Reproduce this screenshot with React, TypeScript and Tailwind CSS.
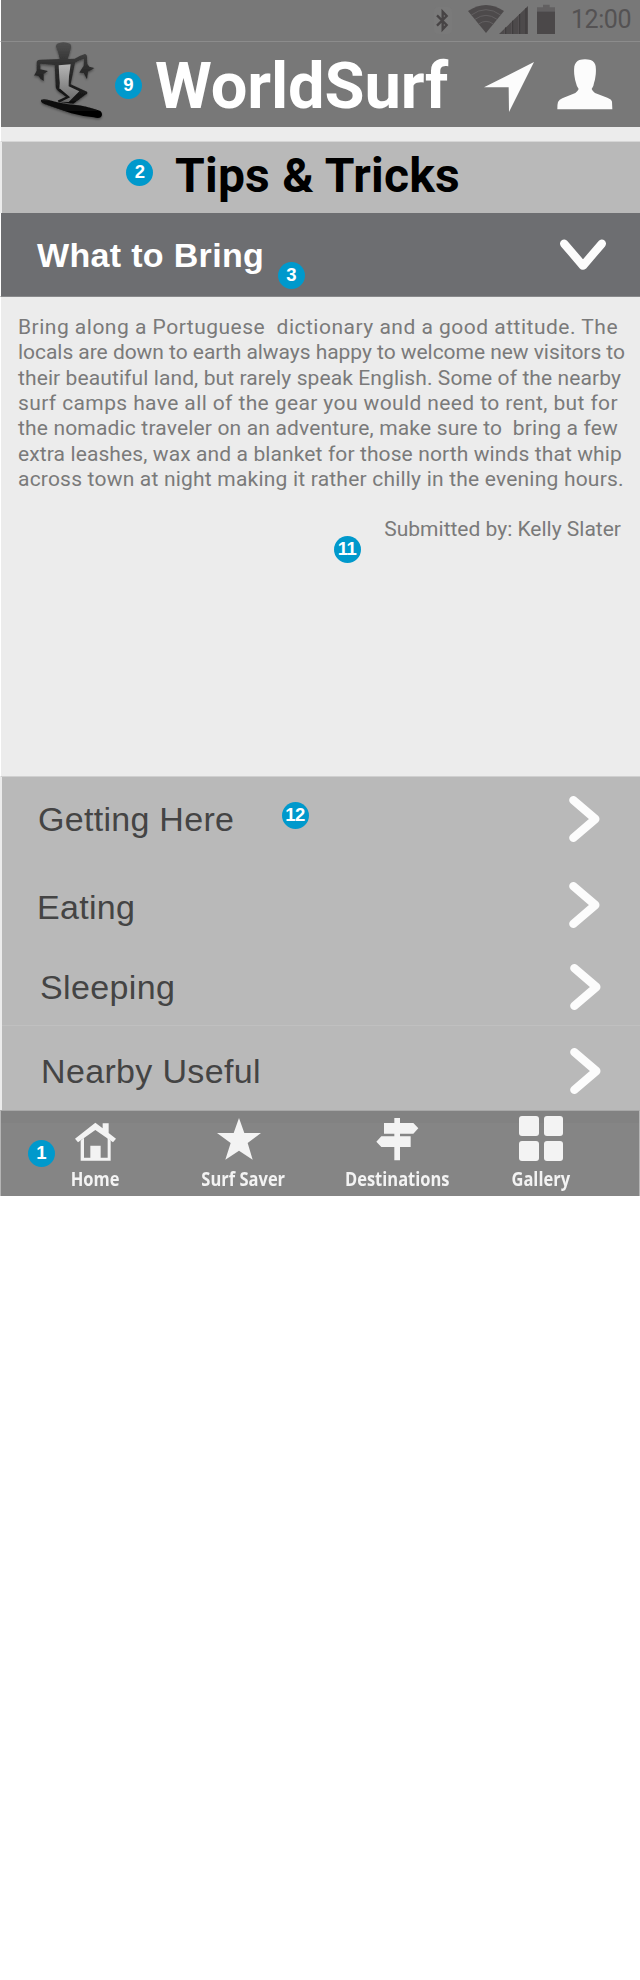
import type { ReactNode } from "react";

function Badge({ children, className }: { children: ReactNode; className: string }) {
  return (
    <span
      className={`absolute flex size-[27px] items-center justify-center rounded-full bg-[#0099cc] font-['Liberation_Sans',sans-serif] text-[18.500px] leading-none font-bold tracking-[-0.6px] text-white ${className}`}
    >
      {children}
    </span>
  );
}

function BluetoothIcon() {
  return (
    <svg className="h-[27px] w-[18px]" viewBox="0 0 54 81">
      <rect width="54" height="81" rx="14" fill="#7a7a7a" />
      <path
        d="M9 25 L38 54 L26 67 V14 L38 27 L9 56"
        fill="none"
        stroke="#474445"
        strokeWidth="7"
      />
    </svg>
  );
}

function WifiIcon() {
  return (
    <svg className="h-7 w-9" viewBox="0 0 108 84">
      <path d="M0 18 Q54 -18 108 18 L54 84 Z" fill="#4d4a4b" />
      <g fill="none" stroke="#666465" strokeWidth="2.5">
        <path d="M10 30 Q54 -2 98 30" />
        <path d="M21 43 Q54 19 87 43" />
        <path d="M32 57 Q54 41 76 57" />
      </g>
    </svg>
  );
}

function SignalIcon() {
  return (
    <svg className="h-7 w-[29px]" viewBox="0 0 87 84">
      <path d="M0 84 L87 0 V84 Z" fill="#4d4a4b" />
      <path d="M20 64 V84 M41 44 V84 M62 24 V84 M81 6 V84" stroke="#3c393a" strokeWidth="3" />
      <path d="M17 68 V84 M38 48 V84 M59 28 V84" stroke="#5c595a" strokeWidth="2" />
    </svg>
  );
}

function BatteryIcon() {
  return (
    <svg className="h-[30px] w-[18px]" viewBox="0 0 54 90">
      <path d="M18 2 H38 V10 H54 V24 H0 V10 H18 Z" fill="#626061" />
      <path d="M0 23 H54 V90 H0 Z" fill="#4b4849" />
    </svg>
  );
}

function SurferLogo() {
  return (
    <svg className="h-[84px] w-[76px] overflow-visible" viewBox="36 30 228 252">
      <defs>
        <linearGradient id="ink" x1="0" y1="36" x2="0" y2="260" gradientUnits="userSpaceOnUse">
          <stop offset="0" stopColor="#505050" />
          <stop offset="0.3" stopColor="#303030" />
          <stop offset="0.7" stopColor="#191919" />
          <stop offset="1" stopColor="#000" />
        </linearGradient>
        <linearGradient id="skin" x1="0" y1="104" x2="0" y2="218" gradientUnits="userSpaceOnUse">
          <stop offset="0" stopColor="#b4b4b4" />
          <stop offset="1" stopColor="#686868" />
        </linearGradient>
        <filter id="shade" x="-20%" y="-20%" width="140%" height="140%">
          <feDropShadow dx="0" dy="4" stdDeviation="3" floodColor="#000" floodOpacity="0.4" />
        </filter>
      </defs>
      <g filter="url(#shade)" fill="url(#ink)">
        <path d="M111 50 Q110 39 124 38 Q134 35 146 39 Q158 40 156 53 Q151 75 146 87 L167 86 Q185 75 198 72 Q205 74 204 84 L205 102 L211 110 L226 114 Q217 121 207 125 L204 148 L194 129 L181 128 Q186 119 190 113 L194 108 L195 86 Q180 91 168 98 L155 163 L204 185 Q208 190 198 195 L163 221 L123 216 L145 201 L120 185 Q109 177 110 165 L107 105 L64 101 L64 118 L87 123 L74 132 L74 153 Q63 148 59 139 Q52 136 45 137 L53 122 L53 99 Q52 90 63 89 L122 87 Q119 68 111 50 Z" />
        <path d="M67 209 Q76 206 92 211 Q140 225 180 226 Q220 234 244 243 Q253 252 246 261 Q239 267 224 262 Q190 259 157 250 Q110 234 76 222 Q62 215 67 209 Z" />
      </g>
      <path
        d="M119 106 L155 103 L150 139 Q149 158 149 169 L181 184 L149 216 L124 215 L147 201 L121 177 Q124 160 121 143 Z"
        fill="url(#skin)"
      />
      <path d="M120 178 L147 201 L118 215" fill="none" stroke="#161616" strokeWidth="7" />
    </svg>
  );
}

function LocationIcon() {
  return (
    <svg className="h-[50px] w-[50px]" viewBox="0 0 150 150">
      <path d="M150 0 L0 76 H74 L75 150 Z" fill="#fcfcfc" />
    </svg>
  );
}

function UserIcon() {
  return (
    <svg className="h-[51px] w-[56px]" viewBox="0 0 168 153">
      <path
        d="M1 151 Q1 135 3 129 Q7 122 16 118 L55 102 Q62 97 65 90 Q59 83 57 72 Q54 64 53 55 Q50 40 52 22 Q55 8 67 3 Q84 -1 101 3 Q114 8 116 22 Q118 40 115 55 Q114 64 111 72 Q110 83 104 90 Q107 97 114 102 L151 116 Q164 121 165 128 L166 151 Z"
        fill="#fcfcfc"
      />
    </svg>
  );
}

function ChevronDown() {
  return (
    <svg className="h-8 w-[46px]" viewBox="0 0 138 96">
      <path
        d="M12.500 14 L69 80 L125.500 14"
        fill="none"
        stroke="#fcfcfc"
        strokeWidth="25"
        strokeLinecap="round"
        strokeLinejoin="round"
      />
    </svg>
  );
}

function ChevronRight() {
  return (
    <svg className="h-[46px] w-[31px]" viewBox="0 0 93 138">
      <path
        d="M13 12.500 L79 69 L13 125.500"
        fill="none"
        stroke="#fcfcfc"
        strokeWidth="25"
        strokeLinecap="round"
        strokeLinejoin="round"
      />
    </svg>
  );
}

function HomeIcon() {
  return (
    <svg className="h-[45px] w-[41px]" viewBox="0 0 123 135">
      <path d="M17 74 V134 H107 V74 L98 65 V125 H77 V89 H46 V125 H27 V65 Z" fill="#f3f3f3" />
      <path
        d="M61 20 L83 37 V22 H101 V51 L123 68 L114 79 L61 42 L9 79 L0 68 Z"
        fill="#f3f3f3"
      />
    </svg>
  );
}

function StarIcon() {
  return (
    <svg className="mr-[9px] h-[45px] w-11" viewBox="0 0 132 135">
      <path
        d="M66 6 L82 51 H132 L92 81 L107 131 L66 104 L25 131 L41 81 L0 51 H50 Z"
        fill="#f3f3f3"
      />
    </svg>
  );
}

function SignpostIcon() {
  return (
    <svg className="h-[45px] w-[43px]" viewBox="0 0 129 135">
      <path
        d="M55 6 H72 V21 H112 L127 37 L112 53 H72 V61 H104 V93 H72 V133 H55 V93 H16 L1 77 L16 61 H55 V53 H24 V21 H55 Z"
        fill="#f3f3f3"
      />
    </svg>
  );
}

function GridIcon() {
  return (
    <span className="grid h-[45px] w-11 grid-cols-2 grid-rows-2 gap-[5px]">
      <i className="rounded-[3px] bg-[#f3f3f3]" />
      <i className="rounded-[3px] bg-[#f3f3f3]" />
      <i className="rounded-[3px] bg-[#f3f3f3]" />
      <i className="rounded-[3px] bg-[#f3f3f3]" />
    </span>
  );
}

const tipLines = [
  { text: "Bring along a Portuguese  dictionary and a good attitude. The", className: "tracking-[0.495px]" },
  { text: "locals are down to earth always happy to welcome new visitors to", className: "tracking-[-0.042px]" },
  { text: "their beautiful land, but rarely speak English. Some of the nearby", className: "tracking-[0.101px]" },
  { text: "surf camps have all of the gear you would need to rent, but for", className: "tracking-[0.390px]" },
  { text: "the nomadic traveler on an adventure, make sure to  bring a few", className: "tracking-[0.167px]" },
  { text: "extra leashes, wax and a blanket for those north winds that whip", className: "tracking-[0.110px]" },
  { text: "across town at night making it rather chilly in the evening hours.", className: "tracking-[0.204px]" },
];

const sections = [
  { label: "Getting Here", row: "h-[84px] pl-[36px] pr-[40px]", text: "tracking-[0.286px]" },
  { label: "Eating", row: "h-[88px] pl-[35px] pr-[40px]", text: "pt-[3px] tracking-[0.3px]" },
  { label: "Sleeping", row: "h-[76px] pl-[38px] pr-[39px]", text: "tracking-[0.368px]" },
  {
    label: "Nearby Useful",
    row: "h-[85px] border-t border-[#c0c0c0] pt-[6px] pl-[39px] pr-[39px]",
    text: "tracking-[0.344px]",
  },
];

const tabs = [
  { label: "Home", icon: <HomeIcon />, className: "w-[141px]" },
  { label: "Surf Saver", icon: <StarIcon />, className: "w-[155px]" },
  { label: "Destinations", icon: <SignpostIcon />, className: "w-[153px]" },
  { label: "Gallery", icon: <GridIcon />, className: "w-[134px]" },
];

export default function App() {
  return (
    <div className="min-h-[1980px] w-[640px] bg-white font-['Roboto',sans-serif]">
      <div className="flex h-[1196px] flex-col bg-[#ececec]">
        <div className="flex h-[42px] shrink-0 border-b border-l border-b-[#8c8c8c] border-l-white bg-[#787878] pl-px">
          <div className="flex pl-[432px]">
            <span className="pt-[7px]"><BluetoothIcon /></span>
            <span className="pt-[5px] pl-[15.500px]"><WifiIcon /></span>
            <span className="-ml-[5px] pt-[6px]"><SignalIcon /></span>
            <span className="pt-1 pl-[9.500px]"><BatteryIcon /></span>
          </div>
          <span className="pt-[5px] pl-[16px] text-[25px] leading-[29px] tracking-[-0.45px] text-[#545253]">
            12:00
          </span>
        </div>

        <header className="relative flex h-[85px] shrink-0 border-l border-white bg-[#787878]">
          <span className="pl-[30px]">
            <span className="-mt-[2px] block"><SurferLogo /></span>
          </span>
          <Badge className="top-[30px] left-[113.500px]">9</Badge>
          <h1 className="w-[329px] pt-[6px] pl-[48px] text-[65px] leading-[76px] font-bold tracking-[-0.12px] text-white">
            WorldSurf
          </h1>
          <span className="pt-5 pl-[48px]"><LocationIcon /></span>
          <span className="pt-[17px] pl-[23px]"><UserIcon /></span>
        </header>

        <div className="h-[15px] shrink-0 border-b border-l border-b-[#d6d6d6] border-l-white" />

        <div className="relative ml-[2px] h-[71px] shrink-0 bg-[#b9b9b9]">
          <Badge className="top-[17px] left-[124px]">2</Badge>
          <h2 className="pt-[6px] pl-[173px] text-[48px] leading-[56px] font-bold tracking-[0.22px] text-black">
            Tips &amp; Tricks
          </h2>
        </div>

        <div className="relative flex h-[84px] shrink-0 items-center justify-between border-b border-l border-b-[#88898b] border-l-white bg-[#6d6e71] pr-[34px] pl-[36px] font-['Liberation_Sans',sans-serif]">
          <span className="text-[34px] leading-[40px] font-bold tracking-[0.327px] text-white">
            What to Bring
          </span>
          <Badge className="top-[49px] left-[276.500px]">3</Badge>
          <ChevronDown />
        </div>

        <section className="relative h-[480px] shrink-0 border-b border-l border-b-[#d0d0d0] border-l-white pt-[18px] pr-[19px] pl-[17px] text-[21px] leading-[25.330px] text-[#7a7a7a]">
          {tipLines.map((line) => (
            <p key={line.text} className={`whitespace-pre ${line.className}`}>
              {line.text}
            </p>
          ))}
          <p className="pt-[25px] text-right">Submitted by: Kelly Slater</p>
          <Badge className="top-[239px] left-[332.500px]">11</Badge>
        </section>

        <div className="relative ml-[2px] shrink-0 bg-[#b9b9b9] font-['Liberation_Sans',sans-serif] text-[34px] leading-[40px] text-[#444444]">
          {sections.map((s) => (
            <div key={s.label} className={`flex items-center justify-between ${s.row}`}>
              <span className={s.text}>{s.label}</span>
              <ChevronRight />
            </div>
          ))}
          <Badge className="top-[25px] left-[279.500px]">12</Badge>
        </div>

        <nav className="relative flex h-[86px] shrink-0 border-t border-r border-l border-t-[#a8a8a8] border-r-[#b5b5b5] border-l-[#b5b5b5] bg-[linear-gradient(#828282_12px,#858585_12px)] pt-[5px] pl-6">
          <Badge className="top-[29px] left-[26.500px]">1</Badge>
          {tabs.map((t) => (
            <div key={t.label} className={`flex flex-col items-center ${t.className}`}>
              {t.icon}
              <span className="scale-x-[0.868] pt-[6px] font-['Open_Sans',sans-serif] text-[19px] leading-[24px] font-bold text-[#f3f3f3]">
                {t.label}
              </span>
            </div>
          ))}
        </nav>
      </div>
    </div>
  );
}
